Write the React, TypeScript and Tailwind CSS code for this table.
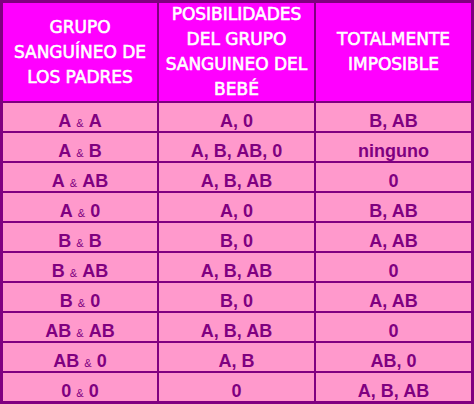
import React from 'react'

const rows: [string, string, string, string][] = [
  ['A', 'A', 'A, 0', 'B, AB'],
  ['A', 'B', 'A, B, AB, 0', 'ninguno'],
  ['A', 'AB', 'A, B, AB', '0'],
  ['A', '0', 'A, 0', 'B, AB'],
  ['B', 'B', 'B, 0', 'A, AB'],
  ['B', 'AB', 'A, B, AB', '0'],
  ['B', '0', 'B, 0', 'A, AB'],
  ['AB', 'AB', 'A, B, AB', '0'],
  ['AB', '0', 'A, B', 'AB, 0'],
  ['0', '0', '0', 'A, B, AB'],
]

const headers = [
  ['GRUPO', 'SANGUÍNEO DE', 'LOS PADRES'],
  ['POSIBILIDADES', 'DEL GRUPO', 'SANGUINEO DEL', 'BEBÉ'],
  ['TOTALMENTE', 'IMPOSIBLE'],
]

export default function App() {
  return (
    <div className="w-[474px] h-[404px] bg-[#800080] p-[3px]">
      <div className="grid grid-cols-[154px_155px_155px] grid-rows-[98px_repeat(10,28px)] gap-[2px]">
        {headers.map((lines, i) => (
          <div
            key={i}
            className="bg-[#ff00ff] text-white flex flex-col items-center justify-center text-center text-[17px] leading-[25px] font-['DejaVu_Sans',sans-serif] [-webkit-text-stroke:0.6px_white]"
          >
            {lines.map((l) => (
              <span key={l} className="whitespace-nowrap">{l}</span>
            ))}
          </div>
        ))}
        {rows.map(([p1, p2, pos, imp], i) => (
          <React.Fragment key={i}>
            <div className="bg-[#ff99cc] text-[#800080] text-center pt-[8px] leading-[20px] font-['Liberation_Sans',Arial,sans-serif] whitespace-nowrap">
              <b className="text-[18px]">{p1}</b>
              <span className="text-[18px]"> </span>
              <span className="text-[11px]">&amp;</span>
              <span className="text-[18px]"> </span>
              <b className="text-[18px]">{p2}</b>
            </div>
            <div className="bg-[#ff99cc] text-[#800080] text-center pt-[8px] leading-[20px] text-[18px] font-bold font-['Liberation_Sans',Arial,sans-serif] whitespace-nowrap">
              {pos}
            </div>
            <div className="bg-[#ff99cc] text-[#800080] text-center pt-[8px] leading-[20px] text-[18px] font-bold font-['Liberation_Sans',Arial,sans-serif] whitespace-nowrap">
              {imp}
            </div>
          </React.Fragment>
        ))}
      </div>
    </div>
  )
}
